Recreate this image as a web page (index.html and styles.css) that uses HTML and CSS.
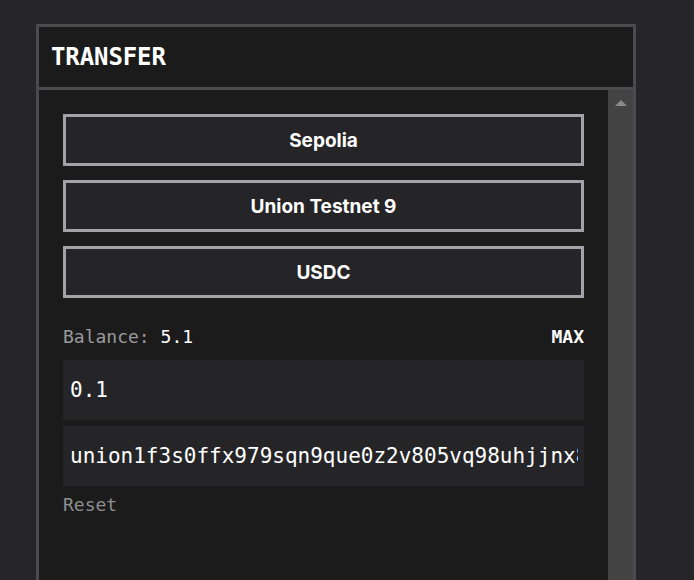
FILE: index.html
```html
<!DOCTYPE html>
<html lang="en">
<head>
<meta charset="utf-8">
<title>Transfer</title>
<link rel="stylesheet" href="styles.css">
</head>
<body>
<section class="panel">
  <header class="panel-header">
    <h2 class="panel-title">TRANSFER</h2>
  </header>
  <div class="panel-body">
    <div class="content">
      <div class="selects">
        <button class="select-btn" type="button">Sepolia</button>
        <button class="select-btn" type="button">Union Testnet 9</button>
        <button class="select-btn" type="button">USDC</button>
      </div>
      <div class="balance-row">
        <span class="balance"><span class="balance-label">Balance:</span> <span class="balance-value">5.1</span></span>
        <button class="max-btn" type="button">MAX</button>
      </div>
      <div class="fields">
        <input class="field" type="text" value="0.1">
        <input class="field" type="text" value="union1f3s0ffx979sqn9que0z2v805vq98uhjjnx8hq2gh3">
      </div>
      <button class="reset-btn" type="button">Reset</button>
    </div>
    <div class="scrollbar">
      <span class="scroll-arrow"></span>
    </div>
  </div>
</section>
</body>
</html>
```

FILE: styles.css
```css
html, body {
  margin: 0;
  height: 580px;
  overflow: hidden;
}
body {
  background: #262628;
  padding: 24px 0 0 36px;
  box-sizing: border-box;
  font-family: "DejaVu Sans Mono", "Liberation Mono", monospace;
  color: #ffffff;
}
.panel {
  width: 600px;
  height: 556px;
  box-sizing: border-box;
  border: 3px solid #4b4b4e;
  border-bottom: none;
  background: #1b1b1b;
  display: flex;
  flex-direction: column;
  overflow: hidden;
}
.panel-header {
  height: 60px;
  border-bottom: 3px solid #4b4b4e;
  display: flex;
  align-items: center;
  padding: 0 12px;
  flex: none;
}
.panel-title {
  margin: 0;
  font-family: "DejaVu Sans Mono", monospace;
  font-weight: bold;
  font-size: 24px;
  color: #ffffff;
  letter-spacing: -0.1px;
}
.panel-body {
  flex: 1;
  display: flex;
  min-height: 0;
}
.content {
  flex: 1;
  padding: 24px;
  display: flex;
  flex-direction: column;
}
.selects {
  display: flex;
  flex-direction: column;
  gap: 14px;
}
.select-btn {
  height: 52px;
  border: 3px solid #a2a2a8;
  background: #252527;
  color: #ffffff;
  font-family: "Inter", "Noto Sans", sans-serif;
  font-weight: 700;
  font-size: 19px;
  padding: 0;
  margin: 0;
}
.balance-row {
  margin-top: 26px;
  height: 24px;
  display: flex;
  align-items: center;
  justify-content: space-between;
  font-size: 18px;
}
.balance-label {
  color: #9a9a9c;
}
.balance-value {
  color: #ffffff;
}
.max-btn {
  background: none;
  border: none;
  padding: 0;
  color: #ffffff;
  font-family: "DejaVu Sans Mono", monospace;
  font-weight: bold;
  font-size: 18px;
}
.fields {
  margin-top: 12px;
  display: flex;
  flex-direction: column;
  gap: 6px;
}
.field {
  height: 60px;
  box-sizing: border-box;
  border: none;
  outline: none;
  background: #252527;
  color: #ffffff;
  font-family: "DejaVu Sans Mono", monospace;
  font-size: 21px;
  padding: 0 6px 0 7px;
  margin: 0;
  width: 100%;
}
.reset-btn {
  align-self: flex-start;
  margin-top: 6px;
  height: 24px;
  background: none;
  border: none;
  padding: 0;
  color: #8e8e90;
  font-family: "DejaVu Sans Mono", monospace;
  font-size: 18px;
}
.scrollbar {
  width: 25px;
  flex: none;
  background: #434343;
  display: flex;
  justify-content: center;
  align-items: flex-start;
  padding-top: 10px;
  box-sizing: border-box;
}
.scroll-arrow {
  width: 0;
  height: 0;
  border-left: 6px solid transparent;
  border-right: 6px solid transparent;
  border-bottom: 6px solid #8a8a8a;
}
```
